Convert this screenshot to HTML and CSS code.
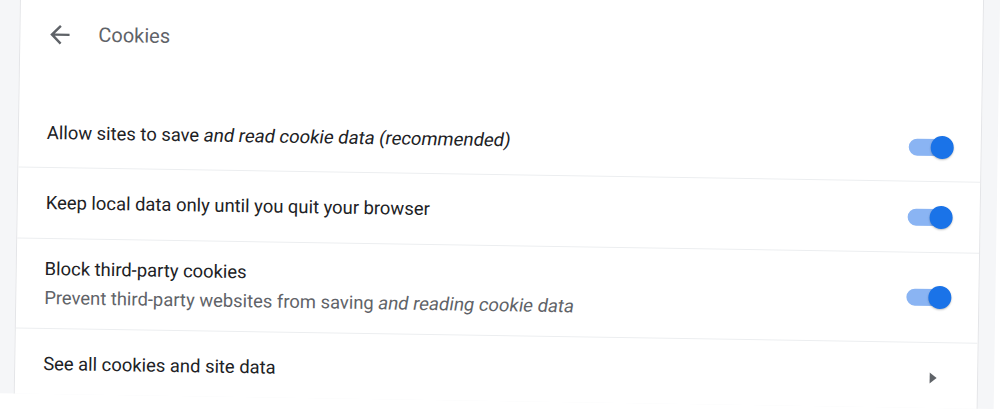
FILE: index.html
```html
<!DOCTYPE html>
<html lang="en">
<head>
<meta charset="utf-8">
<title>Cookies</title>
<link rel="stylesheet" href="styles.css">
</head>
<body>
<div class="frame">
  <div class="card">
    <div class="header">
      <svg class="back" viewBox="0 0 24 24" width="29" height="29" aria-hidden="true">
        <path d="M20 11H7.83l5.59-5.59L12 4l-8 8 8 8 1.41-1.41L7.83 13H20v-2z" fill="#5f6368"/>
      </svg>
      <span class="title">Cookies</span>
    </div>
    <div class="rows">
      <div class="row r1">
        <div class="label">Allow sites to save <span class="slant">and read cookie data (recommended)</span></div>
        <div class="toggle"><span class="knob"></span></div>
      </div>
      <div class="row r2">
        <div class="label">Keep local data only until you quit your browser</div>
        <div class="toggle"><span class="knob"></span></div>
      </div>
      <div class="row r3">
        <div class="text">
          <div class="label">Block third-party cookies</div>
          <div class="sub">Prevent third-party websites from saving <span class="slant">and reading cookie data</span></div>
        </div>
        <div class="toggle"><span class="knob"></span></div>
      </div>
      <div class="row r4">
        <div class="label">See all cookies and site data</div>
        <svg class="sub-arrow" viewBox="0 0 8 12" width="8" height="12" aria-hidden="true">
          <path d="M0.5 0.5 L7.5 6 L0.5 11.5 Z" fill="#5f6368"/>
        </svg>
      </div>
    </div>
  </div>
</div>
</body>
</html>
```

FILE: styles.css
```css
html, body {
  margin: 0;
  padding: 0;
  overflow: hidden;
  background: #ffffff;
}

body {
  width: 1000px;
  height: 413px;
  font-family: Roboto, "Liberation Sans", Arial, sans-serif;
}

.frame {
  box-sizing: border-box;
  width: 1014px;
  height: 421px;
  margin: -20px 0 0 -17px;
  padding: 0 16px 0 34px;
  background: #f5f6f8;
  transform: rotate(0.9deg);
  transform-origin: center center;
}

.card {
  box-sizing: border-box;
  height: 100%;
  overflow: hidden;
  background: #ffffff;
  border-left: 1px solid #e4e5e8;
  border-right: 1px solid #e4e5e8;
  padding-top: 19px;
  display: flex;
  flex-direction: column;
}

.header {
  flex: none;
  height: 84px;
  display: flex;
  align-items: center;
  gap: 24px;
  padding-left: 25px;
}

.back {
  display: block;
  flex: none;
}

.title {
  font-size: 20px;
  color: #5f6368;
  font-weight: 400;
}

.rows {
  flex: none;
  margin-top: 21px;
  display: flex;
  flex-direction: column;
}

.row {
  flex: none;
  box-sizing: border-box;
  display: flex;
  align-items: center;
  justify-content: space-between;
  padding: 0 28px 0 28px;
  border-bottom: 1px solid #eceef0;
}

.r1 { height: 71px; padding-top: 2px; }
.r2 { height: 71px; }
.r3 { height: 90px; }
.r4 { height: 70px; border-bottom: none; padding-right: 40px; }

.label {
  font-size: 18.4px;
  color: #202124;
  line-height: 26px;
}

.sub {
  font-size: 18.4px;
  color: #5f6368;
  line-height: 26px;
  margin-top: 3px;
}

.slant {
  display: inline-block;
  transform: skewX(-9deg);
}

.toggle {
  position: relative;
  flex: none;
  width: 40px;
  height: 17px;
  border-radius: 9px;
  background: #8ab4f3;
  margin-right: 4px;
}

.knob {
  position: absolute;
  top: -3px;
  right: -5px;
  width: 23px;
  height: 23px;
  border-radius: 50%;
  background: #1a73e8;
  box-shadow: 0 1px 2px rgba(0, 0, 0, 0.25);
}

.sub-arrow {
  display: block;
  flex: none;
}
```
